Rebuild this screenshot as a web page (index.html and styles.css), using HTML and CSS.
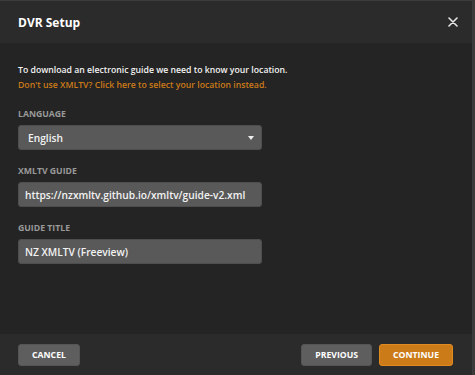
FILE: index.html
```html
<!DOCTYPE html>
<html lang="en">
<head>
    <meta charset="UTF-8">
    <title>DVR Setup</title>
    <link rel="stylesheet" href="styles.css">
</head>
<body>
    <div class="modal">
        <div class="modal-header">
            <h4>DVR Setup</h4>
            <button class="close-btn" aria-label="Close">
                <svg width="10" height="10" viewBox="0 0 10 10"><path d="M1 1 L9 9 M9 1 L1 9" stroke="#e6e6e6" stroke-width="1.6" stroke-linecap="round"/></svg>
            </button>
        </div>

        <div class="modal-body">
            <p class="intro">To download an electronic guide we need to know your location.</p>
            <a href="#" class="alt-link">Don't use XMLTV? Click here to select your location instead.</a>

            <div class="form-group">
                <label>Language</label>
                <div class="select">
                    <span>English</span>
                    <span class="caret"></span>
                </div>
            </div>

            <div class="form-group">
                <label>XMLTV Guide</label>
                <div class="input">https://nzxmltv.github.io/xmltv/guide-v2.xml</div>
            </div>

            <div class="form-group">
                <label>Guide Title</label>
                <div class="input">NZ XMLTV (Freeview)</div>
            </div>
        </div>

        <div class="modal-footer">
            <button class="btn btn-default">Cancel</button>
            <div class="footer-right">
                <button class="btn btn-default">Previous</button>
                <button class="btn btn-primary">Continue</button>
            </div>
        </div>
    </div>
</body>
</html>
```

FILE: styles.css
```css
body {
    margin: 0;
    background: #3a3a3a;
    font-family: 'Open Sans', 'Noto Sans', sans-serif;
    color: #eeeeee;
}

.modal {
    width: 472px;
    height: 374px;
    border-top: 1px solid #3c3c3c;
    border-right: 1px solid #3c3c3c;
    display: flex;
    flex-direction: column;
    background: #242424;
}

.modal-header {
    height: 42px;
    background: #2b2b2b;
    display: flex;
    align-items: center;
    justify-content: space-between;
    padding: 0 14px 0 18px;
}

.modal-header h4 {
    margin: 0;
    font-size: 12px;
    font-weight: 700;
    color: #ffffff;
}

.close-btn {
    background: none;
    border: none;
    padding: 0;
    width: 10px;
    height: 10px;
    display: flex;
}

.modal-body {
    flex: 1;
    padding: 20px 18px 0 18px;
}

.intro {
    margin: 0;
    font-size: 8.7px;
    font-weight: 600;
    line-height: 15px;
    color: #f2f2f2;
}

.alt-link {
    display: block;
    font-size: 8.7px;
    font-weight: 600;
    line-height: 15px;
    color: #cc7b19;
    text-decoration: none;
}

.form-group {
    margin-top: 15px;
    width: 244px;
}

.form-group label {
    display: block;
    font-size: 8.7px;
    font-weight: 700;
    text-transform: uppercase;
    color: #999999;
    line-height: 12px;
    margin-bottom: 5px;
}

.select,
.input {
    height: 25px;
    background: #595959;
    border: 1px solid #4e4e4e;
    border-radius: 3px;
    box-sizing: border-box;
    display: flex;
    align-items: center;
    padding: 0 6px;
    font-size: 10.2px;
    font-weight: 600;
    color: #f2f2f2;
    white-space: nowrap;
}

.select {
    justify-content: space-between;
    padding-left: 9px;
}

.caret {
    width: 0;
    height: 0;
    border-left: 3.5px solid transparent;
    border-right: 3.5px solid transparent;
    border-top: 4px solid #eeeeee;
    margin-right: 1px;
}

.modal-footer {
    height: 41px;
    background: #2b2b2b;
    display: flex;
    align-items: center;
    justify-content: space-between;
    padding: 0 19px 0 18px;
}

.footer-right {
    display: flex;
    gap: 7px;
}

.btn {
    height: 22px;
    border-radius: 3px;
    border: 1px solid transparent;
    padding: 0 13px;
    font-family: 'Open Sans', 'Noto Sans', sans-serif;
    font-size: 8.7px;
    font-weight: 700;
    text-transform: uppercase;
    color: #ffffff;
    cursor: pointer;
}

.btn-default {
    background: #5e5e5e;
    border-color: #555555;
}

.btn-primary {
    background: #cc7b19;
    border-color: #e08a20;
}
```
